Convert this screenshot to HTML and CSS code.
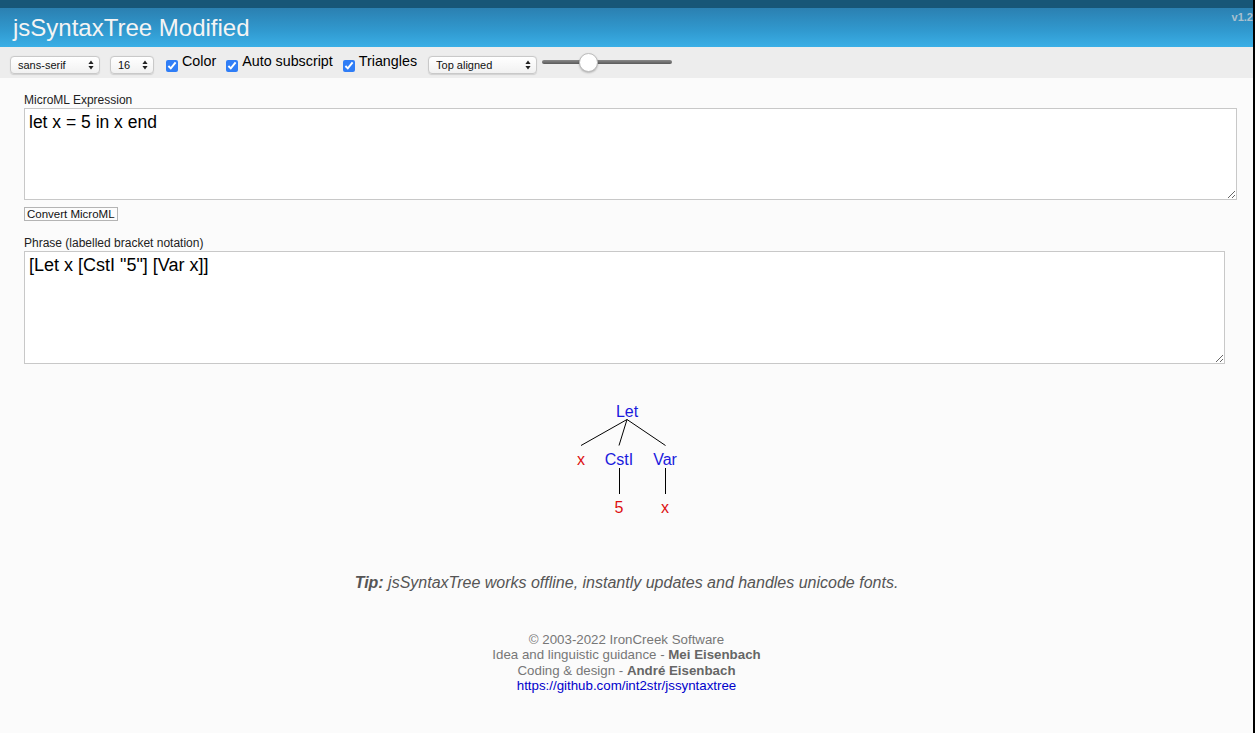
FILE: index.html
```html
<!DOCTYPE html>
<html>
<head>
<meta charset="utf-8">
<title>jsSyntaxTree Modified</title>
<link rel="stylesheet" href="styles.css">
</head>
<body>
<div class="page">
  <header class="header">
    <div class="topstrip"></div>
    <div class="titlebar">
      <h1 class="title">jsSyntaxTree Modified</h1>
      <span class="version">v1.2</span>
    </div>
  </header>
  <div class="toolbar">
    <span class="sel sel-font">
      <select class="select"><option>sans-serif</option></select>
      <svg class="arrows" width="6" height="10" viewBox="0 0 6 10"><path d="M3 0.5 L5.6 4 L0.4 4 Z M3 9.5 L5.6 6 L0.4 6 Z" fill="#222"/></svg>
    </span>
    <span class="sel sel-size">
      <select class="select"><option>16</option></select>
      <svg class="arrows" width="6" height="10" viewBox="0 0 6 10"><path d="M3 0.5 L5.6 4 L0.4 4 Z M3 9.5 L5.6 6 L0.4 6 Z" fill="#222"/></svg>
    </span>
    <label class="check check-color"><input type="checkbox" checked><span>Color</span></label>
    <label class="check check-sub"><input type="checkbox" checked><span>Auto subscript</span></label>
    <label class="check check-tri"><input type="checkbox" checked><span>Triangles</span></label>
    <span class="sel sel-align">
      <select class="select"><option>Top aligned</option></select>
      <svg class="arrows" width="6" height="10" viewBox="0 0 6 10"><path d="M3 0.5 L5.6 4 L0.4 4 Z M3 9.5 L5.6 6 L0.4 6 Z" fill="#222"/></svg>
    </span>
    <input class="slider" type="range" min="0" max="100" value="33">
  </div>
  <main class="content">
    <div class="label label-ml">MicroML Expression</div>
    <textarea class="area area-ml">let x = 5 in x end</textarea>
    <button class="convert">Convert MicroML</button>
    <div class="label label-phrase">Phrase (labelled bracket notation)</div>
    <textarea class="area area-phrase">[Let x [CstI "5"] [Var x]]</textarea>
    <div class="tree">
      <svg width="120" height="130" viewBox="0 0 120 130">
        <g stroke="#000" stroke-width="1" fill="none">
          <line x1="60" y1="24.5" x2="14" y2="50.5"/>
          <line x1="60" y1="24.5" x2="52" y2="50.5"/>
          <line x1="60" y1="24.5" x2="98.5" y2="50.5"/>
          <line x1="52.5" y1="73" x2="52.5" y2="99"/>
          <line x1="98.5" y1="73" x2="98.5" y2="99"/>
        </g>
        <g class="tnode" text-anchor="middle">
          <text x="60" y="22" class="nt">Let</text>
          <text x="14" y="70" class="tm">x</text>
          <text x="52" y="70" class="nt">CstI</text>
          <text x="98" y="70" class="nt">Var</text>
          <text x="52" y="118" class="tm">5</text>
          <text x="98" y="118" class="tm">x</text>
        </g>
      </svg>
    </div>
    <p class="tip"><b>Tip:</b> jsSyntaxTree works offline, instantly updates and handles unicode fonts.</p>
    <footer class="footer">
      <div>© 2003-2022 IronCreek Software</div>
      <div>Idea and linguistic guidance - <b>Mei Eisenbach</b></div>
      <div>Coding &amp; design - <b>André Eisenbach</b></div>
      <div><a class="link" href="#">https://github.com/int2str/jssyntaxtree</a></div>
    </footer>
  </main>
</div>
</body>
</html>
```

FILE: styles.css
```css
html {
  background: #000;
  height: 100%;
}
body {
  margin: 0 2px 0 0;
  min-height: 100%;
  background: #fbfbfb;
  font-family: "Liberation Sans", Arial, Helvetica, sans-serif;
  color: #000;
}
.page {
  display: flex;
  flex-direction: column;
}
.header {
  display: flex;
  flex-direction: column;
}
.topstrip {
  height: 8px;
  background: #175677;
}
.titlebar {
  height: 39px;
  background: linear-gradient(to bottom, #2b80b1 0%, #319ad0 60%, #3aafe6 100%);
  display: flex;
  justify-content: space-between;
  align-items: flex-start;
}
.title {
  margin: 6px 0 0 13px;
  font-size: 24px;
  line-height: 28px;
  font-weight: normal;
  color: #f4f4f4;
}
.version {
  margin-top: 3px;
  font-size: 11px;
  line-height: 13px;
  font-weight: bold;
  color: #a9c0cf;
}
.toolbar {
  height: 31px;
  background: #ededed;
  display: flex;
  align-items: flex-start;
  padding-left: 10px;
}
.sel {
  position: relative;
  display: inline-flex;
  margin-top: 9px;
}
.select {
  appearance: none;
  -webkit-appearance: none;
  height: 18px;
  border: 1px solid #c9c9c9;
  border-radius: 4px;
  background: linear-gradient(to bottom, #ffffff, #f1f1f1);
  font-family: "Liberation Sans", Arial, sans-serif;
  font-size: 11px;
  color: #111;
  padding: 0 0 0 7px;
  box-shadow: 0 0.5px 1px rgba(0,0,0,0.12);
}
.arrows {
  position: absolute;
  right: 6px;
  top: 4px;
}
.sel-font .select { width: 90px; }
.sel-size { margin-left: 10px; }
.sel-size .select { width: 44px; }
.sel-align { margin-left: 11px; }
.sel-align .select { width: 109px; }
.check {
  display: inline-flex;
  align-items: flex-start;
  font-size: 14.3px;
  line-height: 16px;
  margin-top: 6px;
}
.check input {
  width: 12px;
  height: 12px;
  margin: 7px 4px 0 0;
  accent-color: #2f7df6;
}
.check-color { margin-left: 12px; }
.check-sub { margin-left: 10px; }
.check-tri { margin-left: 10px; }
.slider {
  -webkit-appearance: none;
  appearance: none;
  width: 130px;
  height: 20px;
  margin: 5px 0 0 5px;
  background: transparent;
}
.slider::-webkit-slider-runnable-track {
  height: 4px;
  border-radius: 2px;
  background: linear-gradient(to bottom, #8a8a8a, #5a5a5a);
}
.slider::-webkit-slider-thumb {
  -webkit-appearance: none;
  width: 19px;
  height: 19px;
  margin-top: -7.5px;
  border-radius: 50%;
  background: #fff;
  border: 1px solid #bdbdbd;
  box-shadow: 0 1px 2px rgba(0,0,0,0.25);
}
.content {
  display: flex;
  flex-direction: column;
  align-items: stretch;
  padding: 0 0 40px 0;
}
.label {
  margin-left: 24px;
  font-size: 12px;
  line-height: 14px;
  color: #222;
}
.label-ml { margin-top: 15px; }
.label-phrase { margin-top: 15px; }
.area {
  display: block;
  box-sizing: border-box;
  margin: 1px 0 0 24px;
  border: 1px solid #c8c8c8;
  background: #fff;
  font-family: "Liberation Sans", Arial, sans-serif;
  line-height: 20px;
  padding: 3px 4px;
  color: #000;
  resize: both;
  border-radius: 0;
  outline: none;
}
.area-ml {
  width: 1213px;
  height: 92px;
  font-size: 17.5px;
}
.area-phrase {
  width: 1201px;
  height: 113px;
  font-size: 18px;
}
.convert {
  align-self: flex-start;
  margin: 7px 0 0 24px;
  height: 14px;
  padding: 0 2px;
  border: 1px solid #b4b4b4;
  background: #fcfcfc;
  font-family: "Liberation Sans", Arial, sans-serif;
  font-size: 11.5px;
  line-height: 12px;
  color: #111;
  border-radius: 0;
}
.tree {
  display: flex;
  justify-content: center;
  margin-top: 31px;
}
.tree svg {
  display: block;
}
.tnode text {
  font-family: "Liberation Sans", Arial, sans-serif;
  font-size: 16px;
}
.nt { fill: #1a1add; }
.tm { fill: #dd0f0f; }
.tip {
  margin: 49px 0 0 0;
  text-align: center;
  font-size: 16px;
  line-height: 18px;
  font-style: italic;
  color: #555;
}
.footer {
  margin-top: 40px;
  text-align: center;
  font-size: 13.3px;
  line-height: 15.3px;
  color: #777;
}
.footer b {
  color: #666;
}
.link {
  color: #0000cc;
  text-decoration: none;
}
```
